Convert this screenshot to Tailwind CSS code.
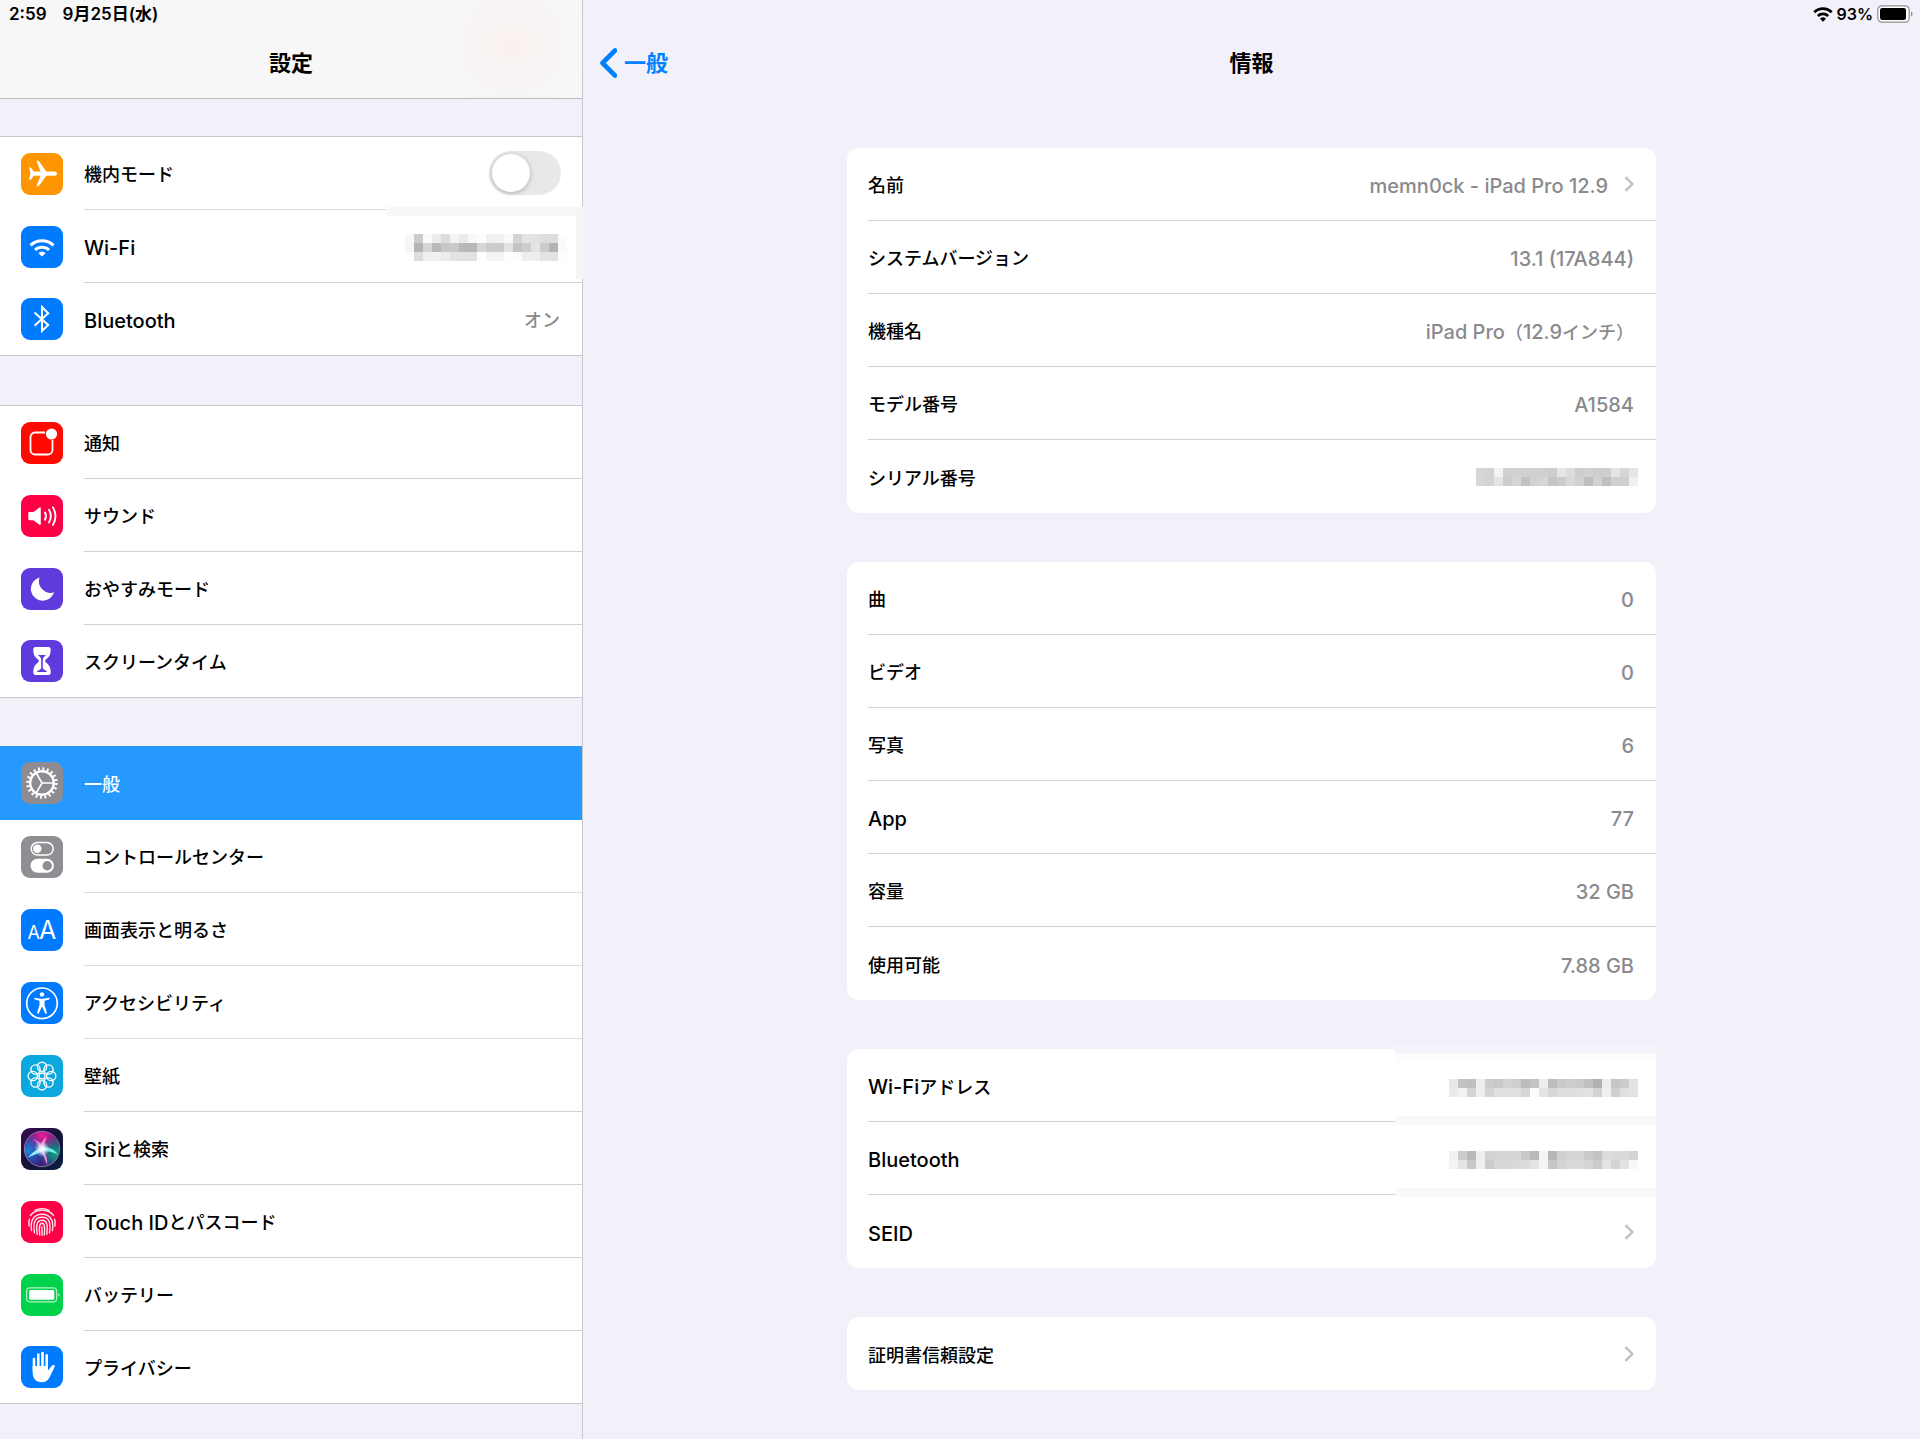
<!DOCTYPE html>
<html lang="ja">
<head>
<meta charset="utf-8">
<meta name="viewport" content="width=device-width, initial-scale=1">
<title>設定</title>
<script src="https://cdn.jsdelivr.net/npm/@tailwindcss/browser@4"></script>
</head>
<body class="flex min-h-screen bg-[#f2f1f9] font-['Inter','Noto_Sans_CJK_JP',sans-serif] text-[18px] leading-6 font-medium text-black">

<!-- Sidebar -->
<aside class="w-[583px] shrink-0 border-r border-[#c9c8cf]">
  <header class="flex h-[99px] flex-col border-b border-[#bcbbc1] bg-[#f7f7f7] bg-[radial-gradient(circle_at_88%_45%,#f9f1f0_0,#f7f7f7_14%)]">
    <div class="flex h-7 items-center gap-4 pl-[9px] text-[17px] font-semibold"><time>2:59</time><span>9月25日(水)</span></div>
    <h1 class="pt-[19px] text-center text-[22px] leading-8 font-bold">設定</h1>
  </header>

  <nav class="flex flex-col gap-12 pt-[37px]">
    <ul class="border-t border-[#c9c8cc] bg-white">
      <li class="flex h-[73px] items-center pl-[21px]">
        <svg class="size-[42px] shrink-0" viewBox="0 0 42 42"><rect width="42" height="42" rx="9" fill="#ff9500"/><path d="M36 20.7c0-1.500-1.600-2.100-3.200-2.100h-7.500L18 8.300c-.3-.4-.6-.5-1-.5h-1.500l4 10.800h-6.700l-2.600-3.500c-.3-.4-.5-.5-.9-.5H8l1.500 6.100L8 26.800h1.300c.4 0 .6-.1.900-.5l2.600-3.500h6.700l-4 10.500H17c.4 0 .7-.1 1-.5l7.300-10h7.500c1.600 0 3.200-.6 3.200-2.100z" fill="#fff"/></svg>
        <div class="ml-[21px] flex h-full flex-1 items-center justify-between border-b border-[#d9d9dc] pr-[21px]">
          <label for="airplane" class="pt-[3px]">機内モード</label>
          <input id="airplane" type="checkbox" role="switch" class="h-[44px] w-[72px] appearance-none rounded-full bg-[#e8e8ea] before:mt-[3px] before:ml-[3px] before:block before:size-[38px] before:rounded-full before:bg-white before:shadow-[0_1px_5px_rgba(0,0,0,0.25)] before:content-['']">
        </div>
      </li>
      <li><a href="#wifi" class="relative flex h-[73px] items-center pl-[21px]">
        <svg class="size-[42px] shrink-0" viewBox="0 0 42 42"><rect width="42" height="42" rx="9" fill="#007aff"/><g fill="none" stroke="#fff" stroke-width="3"><path d="M9.500 19.300a16.500 16.500 0 0 1 23 0"/><path d="M14 24a10.200 10.200 0 0 1 14 0"/></g><path d="M21 30.600l-3.600-3.500a5.400 5.400 0 0 1 7.200 0z" fill="#fff"/></svg>
        <span class="ml-[21px] flex h-full flex-1 items-center border-b border-[#d0d0d4] pt-[3px] text-[20px]">Wi-Fi</span>
        <span class="absolute -top-[3px] right-[6px] h-[9px] w-[190px] bg-[#f8f8f8]"></span>
        <span class="absolute -top-[3px] -right-[3px] h-[72px] w-[9px] bg-[#f5f5f6]"></span>
        <svg class="absolute top-6 right-[15px] h-[27px] w-[162px]" role="img" aria-label="Wi-Fi" data-mosaic="f7ccfaecddf3eaf8fdf0f2f9d4e4e2ddddfb f5b5d5b9c8c8b8b8d6cbcbe2c4cee4cbb4fa fdddf0f0ece2e2e2fef4f4fefbeeeee3e3fd"></svg>
      </a></li>
      <li><a href="#bluetooth" class="flex h-[73px] items-center border-b border-[#c9c8cc] pl-[21px]">
        <svg class="size-[42px] shrink-0" viewBox="0 0 42 42"><rect width="42" height="42" rx="9" fill="#007aff"/><path d="M13.500 14.500L27.200 27 21 33V9l6.200 6.200L13.500 27.700" fill="none" stroke="#fff" stroke-width="2"/></svg>
        <span class="ml-[21px] flex-1 pt-[3px] text-[20px]">Bluetooth</span><span class="pt-[3px] pr-[22px] text-[#8a8a8e]">オン</span>
      </a></li>
    </ul>

    <ul class="mt-px border-t border-[#c9c8cc] bg-white">
      <li><a href="#notifications" class="flex h-[73px] items-center pl-[21px]">
        <svg class="size-[42px] shrink-0" viewBox="0 0 42 42"><rect width="42" height="42" rx="9" fill="#ff0a00"/><path d="M24 10.500H14a4.500 4.500 0 0 0-4.500 4.500v13a4.500 4.500 0 0 0 4.500 4.500h13a4.500 4.500 0 0 0 4.500-4.500V18" fill="none" stroke="#fff" stroke-width="1.800"/><circle cx="30.500" cy="12" r="5.600" fill="#fff"/></svg>
        <span class="ml-[21px] flex h-full flex-1 items-center border-b border-[#d0d0d4] pt-[3px]">通知</span>
      </a></li>
      <li><a href="#sound" class="flex h-[73px] items-center pl-[21px]">
        <svg class="size-[42px] shrink-0" viewBox="0 0 42 42"><rect width="42" height="42" rx="9" fill="#ff0046"/><path d="M8.500 17h4l6-4.500c.7-.5 1.300-.2 1.300.6v16c0 .8-.6 1.100-1.300.6l-6-4.500h-4c-.8 0-1.200-.4-1.200-1.200v-5.800c0-.8.4-1.200 1.200-1.200z" fill="#fff"/><g fill="none" stroke="#fff" stroke-width="1.900" stroke-linecap="round"><path d="M24 17.500a7.500 7.500 0 0 1 0 7.200"/><path d="M28 14.800a12.500 12.500 0 0 1 0 12.600"/><path d="M32 12.400a17.500 17.500 0 0 1 0 17.400"/></g></svg>
        <span class="ml-[21px] flex h-full flex-1 items-center border-b border-[#d0d0d4] pt-[3px]">サウンド</span>
      </a></li>
      <li><a href="#dnd" class="flex h-[73px] items-center pl-[21px]">
        <svg class="size-[42px] shrink-0" viewBox="0 0 42 42"><rect width="42" height="42" rx="9" fill="#5f3adc"/><path d="M18.600 9.500A11.800 11.800 0 1 0 33 24.300 11.600 11.600 0 0 1 18.600 9.500z" fill="#fff"/></svg>
        <span class="ml-[21px] flex h-full flex-1 items-center border-b border-[#d0d0d4] pt-[3px]">おやすみモード</span>
      </a></li>
      <li><a href="#screentime" class="flex h-[73px] items-center border-b border-[#c9c8cc] pl-[21px]">
        <svg class="size-[42px] shrink-0" viewBox="0 0 42 42"><rect width="42" height="42" rx="9" fill="#5f3adc"/><path d="M14.500 7h13c1.500 0 2.200 1 2.200 2.500 0 5-1.500 7.500-4.500 9.700-1.300 1-1.300 2.600 0 3.600 3 2.200 4.500 4.700 4.500 9.700 0 1.500-.7 2.500-2.200 2.500h-13c-1.500 0-2.200-1-2.200-2.500 0-5 1.500-7.500 4.500-9.700 1.300-1 1.300-2.600 0-3.600-3-2.200-4.500-4.700-4.500-9.700C12.300 8 13 7 14.500 7z" fill="#fff"/><path d="M17 15h8c-.8 1.300-3.200 2-3.200 4.500V28c0 1.600 3.400 2.200 4.400 4H15.800c1-1.800 4.400-2.400 4.400-4v-8.500C20.200 17 17.800 16.300 17 15z" fill="#5f3adc"/></svg>
        <span class="ml-[21px] flex-1 pt-[3px]">スクリーンタイム</span>
      </a></li>
    </ul>

    <ul class="bg-white">
      <li><a href="#general" aria-current="page" class="flex h-[74px] items-center bg-[#2699ff] pl-[21px] text-white">
        <svg class="size-[42px] shrink-0" viewBox="0 0 42 42"><rect width="42" height="42" rx="9" fill="#8e8c93"/><g fill="none" stroke="#fff"><circle cx="21" cy="21" r="11.800" stroke-width="2.400"/><circle cx="21" cy="21" r="14.300" stroke-width="3" stroke-dasharray="1.900 2.592"/><path d="M21 21h11.500M21 21l-5.800-10M21 21l-5.800 10" stroke-width="1.600"/></g></svg>
        <span class="ml-[21px] pt-[3px]">一般</span>
      </a></li>
      <li><a href="#control" class="flex h-[73px] items-center pl-[21px]">
        <svg class="size-[42px] shrink-0" viewBox="0 0 42 42"><rect width="42" height="42" rx="9" fill="#8e8e93"/><rect x="10.200" y="6.500" width="22" height="12.600" rx="6.300" fill="none" stroke="#fff" stroke-width="1.500"/><circle cx="16.300" cy="12.800" r="4.200" fill="#fff"/><rect x="9.500" y="22.700" width="23.400" height="14" rx="7" fill="#fff"/><circle cx="26.200" cy="29.700" r="4.700" fill="#8e8e93"/></svg>
        <span class="ml-[21px] flex h-full flex-1 items-center border-b border-[#dcdcdf] pt-[3px]">コントロールセンター</span>
      </a></li>
      <li><a href="#display" class="flex h-[73px] items-center pl-[21px]">
        <svg class="size-[42px] shrink-0" viewBox="0 0 42 42"><rect width="42" height="42" rx="9" fill="#007aff"/><text x="6.500" y="30" font-size="18" font-weight="400" fill="#fff" font-family="Inter">A</text><text x="18" y="30" font-size="25" font-weight="400" fill="#fff" font-family="Inter">A</text></svg>
        <span class="ml-[21px] flex h-full flex-1 items-center border-b border-[#dcdcdf] pt-[3px]">画面表示と明るさ</span>
      </a></li>
      <li><a href="#accessibility" class="flex h-[73px] items-center pl-[21px]">
        <svg class="size-[42px] shrink-0" viewBox="0 0 42 42"><rect width="42" height="42" rx="9" fill="#007aff"/><circle cx="21" cy="21.300" r="15.300" fill="none" stroke="#fff" stroke-width="1.700"/><circle cx="21" cy="12.500" r="2.200" fill="#fff"/><path d="M14.300 15.800l5 .9h3.400l5-.9c1.200-.2 1.500 1.400.4 1.700l-4.600 1.300v4.200l2.300 7.600c.3 1.200-1.200 1.700-1.700.6L21.300 25h-.6l-2.800 6.200c-.5 1.100-2 .6-1.700-.6l2.300-7.600v-4.200l-4.600-1.300c-1.100-.3-.8-1.900.4-1.700z" fill="#fff"/></svg>
        <span class="ml-[21px] flex h-full flex-1 items-center border-b border-[#dcdcdf] pt-[3px]">アクセシビリティ</span>
      </a></li>
      <li><a href="#wallpaper" class="flex h-[73px] items-center pl-[21px]">
        <svg class="size-[42px] shrink-0" viewBox="0 0 42 42"><rect width="42" height="42" rx="9" fill="#0aa8dc"/><g fill="none" stroke="#fff" stroke-width="1.400"><circle cx="21" cy="21" r="3"/><circle cx="21" cy="11.800" r="4.600"/><circle cx="27.500" cy="14.500" r="4.600"/><circle cx="30.200" cy="21" r="4.600"/><circle cx="27.500" cy="27.500" r="4.600"/><circle cx="21" cy="30.200" r="4.600"/><circle cx="14.500" cy="27.500" r="4.600"/><circle cx="11.800" cy="21" r="4.600"/><circle cx="14.500" cy="14.500" r="4.600"/></g></svg>
        <span class="ml-[21px] flex h-full flex-1 items-center border-b border-[#d0d0d4] pt-[3px]">壁紙</span>
      </a></li>
      <li><a href="#siri" class="flex h-[73px] items-center pl-[21px]">
        <svg class="size-[42px] shrink-0" viewBox="0 0 42 42">
          <defs>
            <linearGradient id="siriBg" x1="0" y1="0" x2="1" y2="1"><stop offset="0" stop-color="#3b0a52"/><stop offset=".5" stop-color="#17123a"/><stop offset="1" stop-color="#08203f"/></linearGradient>
            <radialGradient id="siriPink" cx=".5" cy=".12" r=".55"><stop offset="0" stop-color="#f0189a"/><stop offset="1" stop-color="#e0158a" stop-opacity="0"/></radialGradient>
            <radialGradient id="siriTeal" cx=".88" cy=".62" r=".5"><stop offset="0" stop-color="#0aa878"/><stop offset="1" stop-color="#0a9a8c" stop-opacity="0"/></radialGradient>
            <radialGradient id="siriBlue" cx=".1" cy=".55" r=".5"><stop offset="0" stop-color="#1a86e0"/><stop offset="1" stop-color="#1a6fd0" stop-opacity="0"/></radialGradient>
            <radialGradient id="siriGlow"><stop offset="0" stop-color="#fff"/><stop offset=".4" stop-color="#e8fbff" stop-opacity=".8"/><stop offset="1" stop-color="#8fe6ff" stop-opacity="0"/></radialGradient>
          </defs>
          <rect width="42" height="42" rx="9" fill="url(#siriBg)"/>
          <g><circle cx="21" cy="21" r="17.500" fill="#3a2080"/><circle cx="21" cy="21" r="17.500" fill="url(#siriPink)"/><circle cx="21" cy="21" r="17.500" fill="url(#siriTeal)"/><circle cx="21" cy="21" r="17.500" fill="url(#siriBlue)"/><circle cx="21" cy="21" r="17.700" fill="none" stroke="#a59bb8" stroke-width=".9" opacity=".8"/></g>
          <path d="M21 19C16 21.500 11 24.500 7 29.500c6-2.500 11-4.500 15.500-7z" fill="#8ff0ff"/><path d="M21 19c8.500 0 13 3 16 7.500-5-2.500-10-3.500-16-3.500z" fill="#6fece6"/><path d="M19.500 20c4 3 7.500 9 6.500 17-2-6-4-11-7-14.500z" fill="#f08ad8"/><path d="M19 21.500c-1.500-4-3.500-7.500-7-10.500 5.500 1.500 9.500 5.500 11 9z" fill="#e66ad0"/><path d="M19.500 20.500c0-5 2-9 6-12-1.500 5-2 8.500-2.500 12z" fill="#ff7ac0"/>
          <circle cx="21" cy="21" r="8" fill="url(#siriGlow)"/>
        </svg>
        <span class="ml-[21px] flex h-full flex-1 items-center border-b border-[#d0d0d4] pt-[3px]"><span class="text-[20px]">Siri</span>と検索</span>
      </a></li>
      <li><a href="#touchid" class="flex h-[73px] items-center pl-[21px]">
        <svg class="size-[42px] shrink-0" viewBox="0 0 42 42"><rect width="42" height="42" rx="9" fill="#ff0046"/><g fill="none" stroke="#ffe3ea" stroke-width="1.400" stroke-linecap="round"><path d="M14 9.300c4-2.300 10-2.300 14 0"/><path d="M9.500 14.500c5-7 18-7 23 0"/><path d="M8 25c-.4-2.500-.3-4.800.4-6.800M34 25c.4-2.500.3-4.800-.4-6.800"/><path d="M10.600 29.500C9.200 22 11 13.300 21 13.300S32.800 22 31.400 29.500"/><path d="M13.500 31.800c-1.300-8.300-.8-15.500 7.500-15.500s8.800 7.200 7.500 15.500"/><path d="M16.200 33.300c-1-7.800-1-14 4.800-14s5.800 6.200 4.800 14"/><path d="M18.700 34c-.6-6-.8-11.700 2.300-11.700s2.900 5.700 2.300 11.700"/><path d="M21 26v8.300"/></g></svg>
        <span class="ml-[21px] flex h-full flex-1 items-center border-b border-[#d0d0d4] pt-[3px]"><span class="text-[20px]">Touch ID</span>とパスコード</span>
      </a></li>
      <li><a href="#battery" class="flex h-[73px] items-center pl-[21px]">
        <svg class="size-[42px] shrink-0" viewBox="0 0 42 42"><rect width="42" height="42" rx="9" fill="#00d24c"/><rect x="5.600" y="13.900" width="30" height="14" rx="3.500" fill="none" stroke="#b5f2c9" stroke-width="1.200"/><rect x="8" y="16" width="25.300" height="9.800" rx="1.500" fill="#fff"/><path d="M37.200 19v3.800c1.800-.6 1.800-3.200 0-3.800z" fill="#b5f2c9"/></svg>
        <span class="ml-[21px] flex h-full flex-1 items-center border-b border-[#d0d0d4] pt-[3px]">バッテリー</span>
      </a></li>
      <li><a href="#privacy" class="flex h-[73px] items-center border-b border-[#c9c8cc] pl-[21px]">
        <svg class="size-[42px] shrink-0" viewBox="0 0 42 42"><rect width="42" height="42" rx="9" fill="#007aff"/><g fill="none" stroke="#fff" stroke-width="2.600" stroke-linecap="round"><path d="M13 13v12M17.300 8.500V22M21.500 7v15M25.700 9.300V23"/></g><path d="M11.700 20h15.300v4.500l3.800-4.700c1-1.200 3.500-1 3 .6L29 30.500c-1.700 3.700-4.200 5.800-8 5.800-6.400 0-9.300-4-9.300-10z" fill="#fff"/></svg>
        <span class="ml-[21px] flex-1 pt-[3px]">プライバシー</span>
      </a></li>
    </ul>
  </nav>
</aside>

<!-- Detail pane -->
<main class="min-w-0 flex-1">
  <div class="flex h-7 items-center justify-end gap-1 pr-[7px] text-[16px] font-semibold">
    <svg class="h-4 w-5" viewBox="0 0 20 16"><g fill="none" stroke="#000" stroke-width="2.700"><path d="M1.300 6.200a12.600 12.600 0 0 1 17.400 0"/><path d="M4.800 9.900a7.600 7.600 0 0 1 10.400 0"/></g><path d="M10 15.700l-3-3a4.300 4.300 0 0 1 6 0z"/></svg>
    <span>93%</span>
    <svg class="h-[18px] w-[36px]" viewBox="0 0 36 18"><rect x=".8" y=".8" width="31.400" height="16.400" rx="4.200" fill="#fff" stroke="#8f8e94" stroke-width="1.200"/><rect x="3" y="3" width="26" height="12" rx="2.200"/><path d="M34 6.500v5c2-.8 2-4.200 0-5z" fill="#8f8e94"/></svg>
  </div>
  <header class="grid h-[71px] grid-cols-3 items-start pt-[19px] text-[22px] leading-8">
    <a href="#general" class="flex items-center gap-[7px] pl-4 font-semibold text-[#0080ff]">
      <svg class="h-[30px] w-[18px]" viewBox="0 0 18 30"><path d="M16 2.500L3.500 15 16 27.500" fill="none" stroke="currentColor" stroke-width="4.600" stroke-linecap="round" stroke-linejoin="round"/></svg>一般</a>
    <h2 class="text-center font-bold">情報</h2>
  </header>

  <div class="mx-auto flex w-full max-w-[809px] flex-col gap-[49px] pt-[49px] pb-12 text-[#8a8a8e]">
    <dl class="rounded-xl bg-white pl-[21px]">
      <div class="flex h-[73px] items-center justify-between border-b border-[#d0d0d4] pr-[22px]"><dt class="pt-1 text-black">名前</dt><dd><a href="#name" class="flex items-center gap-4"><span class="pt-1 text-[20px]">memn0ck - iPad Pro 12.9</span><svg class="h-4 w-[10px]" viewBox="0 0 10 16"><path d="M1.500 1.200L8.300 8l-6.800 6.800" fill="none" stroke="#c0c0c4" stroke-width="2.400"/></svg></a></dd></div>
      <div class="flex h-[73px] items-center justify-between border-b border-[#d0d0d4] pr-[22px]"><dt class="pt-1 text-black">システムバージョン</dt><dd class="pt-1 text-[20px]">13.1 (17A844)</dd></div>
      <div class="flex h-[73px] items-center justify-between border-b border-[#d0d0d4] pr-[22px]"><dt class="pt-1 text-black">機種名</dt><dd class="pt-1"><span class="text-[20px]">iPad Pro</span>（<span class="text-[20px]">12.9</span>インチ）</dd></div>
      <div class="flex h-[73px] items-center justify-between border-b border-[#d0d0d4] pr-[22px]"><dt class="pt-1 text-black">モデル番号</dt><dd class="pt-1 text-[20px]">A1584</dd></div>
      <div class="flex h-[73px] items-center justify-between pr-[18px]"><dt class="pt-1 text-black">シリアル番号</dt><dd><svg class="h-[18px] w-[162px]" role="img" aria-label="シリアル番号" data-mosaic="d6d3f4d0d2d0d0d0cde6dccdd2cecfe4d6e6 d6d3e4ccd4c2d2d6c6ccd8d2bfd2c0d0d0f0"></svg></dd></div>
    </dl>

    <dl class="rounded-xl bg-white pl-[21px]">
      <div class="flex h-[73px] items-center justify-between border-b border-[#d0d0d4] pr-[22px]"><dt class="pt-1 text-black">曲</dt><dd class="pt-1 text-[20px]">0</dd></div>
      <div class="flex h-[73px] items-center justify-between border-b border-[#d0d0d4] pr-[22px]"><dt class="pt-1 text-black">ビデオ</dt><dd class="pt-1 text-[20px]">0</dd></div>
      <div class="flex h-[73px] items-center justify-between border-b border-[#d0d0d4] pr-[22px]"><dt class="pt-1 text-black">写真</dt><dd class="pt-1 text-[20px]">6</dd></div>
      <div class="flex h-[73px] items-center justify-between border-b border-[#d0d0d4] pr-[22px]"><dt class="pt-1 text-[20px] text-black">App</dt><dd class="pt-1 text-[20px]">77</dd></div>
      <div class="flex h-[73px] items-center justify-between border-b border-[#d0d0d4] pr-[22px]"><dt class="pt-1 text-black">容量</dt><dd class="pt-1 text-[20px]">32 GB</dd></div>
      <div class="flex h-[73px] items-center justify-between pr-[22px]"><dt class="pt-1 text-black">使用可能</dt><dd class="pt-1 text-[20px]">7.88 GB</dd></div>
    </dl>

    <dl class="relative rounded-xl bg-white pl-[21px]">
      <div class="flex h-[73px] items-center justify-between border-b border-[#d0d0d4] pr-[18px]"><dt class="pt-1 text-black"><span class="text-[20px]">Wi-Fi</span>アドレス</dt><dd class="relative z-10 pt-[6px]"><svg class="h-[18px] w-[189px]" role="img" aria-label="Wi-Fiアドレス" data-mosaic="e8c2bfeeccc9d2cebcc4eebcc9cccac0b0eec6cce2 eaf2d4eed4e0e0e0d6fce4d8dedee0e2d2f0d0e0e2"></svg></dd></div>
      <div class="flex h-[73px] items-center justify-between border-b border-[#d0d0d4] pr-[18px]"><dt class="pt-1 text-[20px] text-black">Bluetooth</dt><dd class="relative z-10 pt-1"><svg class="h-[18px] w-[189px]" role="img" aria-label="Bluetooth" data-mosaic="f2ccb9eed2d4d6d6c8baf4b6d0d4d6cac4dcdadad4 f4e4c8eecbd8d8dadce4f4c6d4dadad6cce4d4e2f8"></svg></dd></div>
      <div class="flex h-[73px] items-center justify-between pr-[22px]"><dt class="pt-1 text-[20px] text-black">SEID</dt><dd><a href="#seid" aria-label="SEID" class="block"><svg class="h-4 w-[10px]" viewBox="0 0 10 16"><path d="M1.500 1.200L8.300 8l-6.800 6.800" fill="none" stroke="#c0c0c4" stroke-width="2.400"/></svg></a></dd></div>
      <!-- Edges of the masked area over the two address rows -->
      <div class="absolute -top-[5px] right-0 flex w-[261px] flex-col">
        <span class="h-[9px] bg-[#f5f4fa]"></span>
        <span class="h-[9px] bg-[#fcfcfc]"></span>
        <span class="mt-[54px] h-[9px] bg-[#f9f9f9]"></span>
        <span class="mt-[63px] h-[9px] bg-[#f9f9f9]"></span>
      </div>
    </dl>

    <section class="rounded-xl bg-white">
      <a href="#certificates" class="flex h-[73px] items-center justify-between pr-[22px] pl-[21px]"><span class="pt-1 text-black">証明書信頼設定</span><svg class="h-4 w-[10px]" viewBox="0 0 10 16"><path d="M1.500 1.200L8.300 8l-6.800 6.800" fill="none" stroke="#c0c0c4" stroke-width="2.400"/></svg></a>
    </section>
  </div>
</main>

<script>
// Fill each masked value with 9px grey tiles, one two-digit grey level per tile.
document.querySelectorAll('[data-mosaic]').forEach(svg => {
  svg.dataset.mosaic.split(' ').forEach((row, y) => {
    row.match(/../g).forEach((level, x) => {
      const tile = document.createElementNS('http://www.w3.org/2000/svg', 'rect');
      tile.setAttribute('x', x * 9);
      tile.setAttribute('y', y * 9);
      tile.setAttribute('width', 9);
      tile.setAttribute('height', 9);
      tile.setAttribute('fill', '#' + level.repeat(3));
      svg.appendChild(tile);
    });
  });
});
</script>
</body>
</html>
